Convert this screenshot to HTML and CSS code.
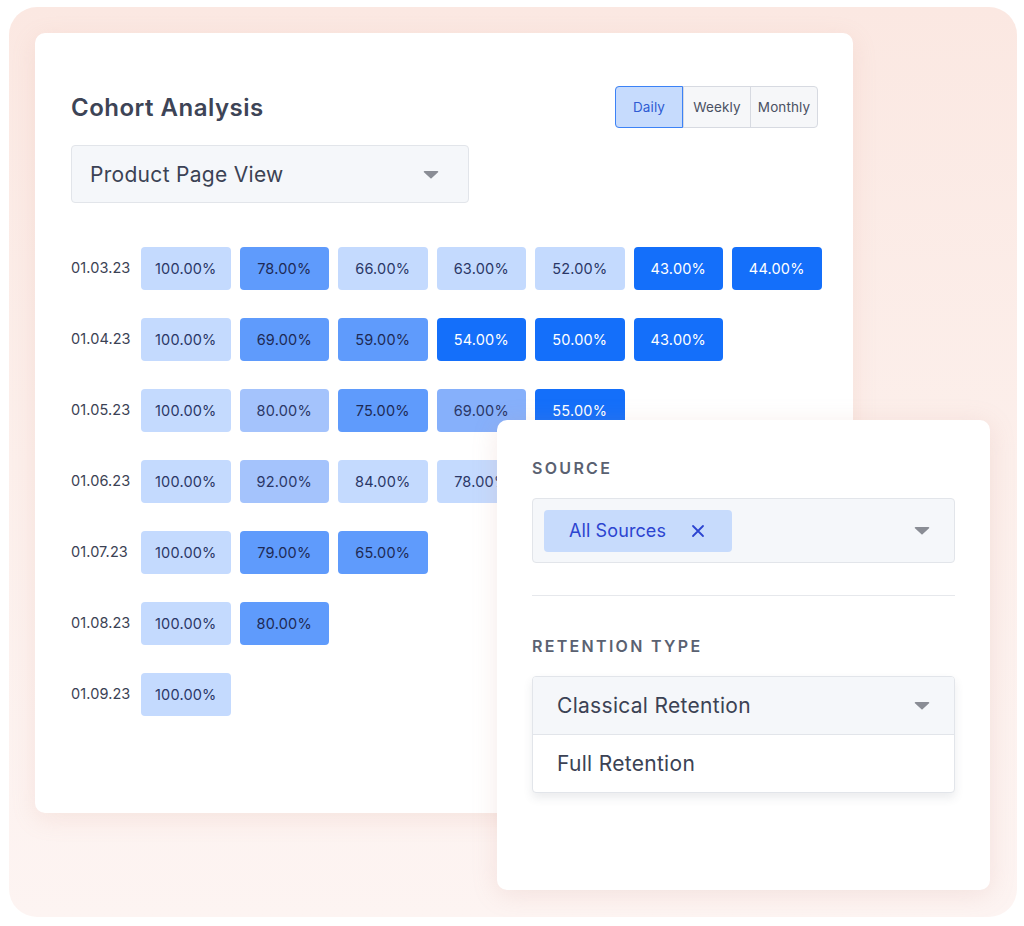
FILE: index.html
```html
<!DOCTYPE html>
<html lang="en">
<head>
<meta charset="utf-8">
<title>Cohort Analysis</title>
<link rel="stylesheet" href="styles.css">
</head>
<body>
<div class="backdrop">
  <section class="card">
    <header class="card-head">
      <h1 class="title">Cohort Analysis</h1>
      <div class="seg">
        <button class="seg-btn active">Daily</button>
        <button class="seg-btn">Weekly</button>
        <button class="seg-btn">Monthly</button>
      </div>
    </header>
    <div class="select event-select">
      <span>Product Page View</span>
      <svg class="caret" width="16" height="9" viewBox="0 0 16 9"><path d="M1.5 1h13a.8.8 0 0 1 .55 1.37l-6.5 5.8a.8.8 0 0 1-1.1 0L.95 2.37A.8.8 0 0 1 1.5 1z" fill="#8a8d95"/></svg>
    </div>
    <div class="cohort">
      <div class="row"><span class="date">01.03.23</span><span class="cell l">100.00%</span><span class="cell m">78.00%</span><span class="cell l">66.00%</span><span class="cell l">63.00%</span><span class="cell l">52.00%</span><span class="cell d">43.00%</span><span class="cell d">44.00%</span></div>
      <div class="row"><span class="date">01.04.23</span><span class="cell l">100.00%</span><span class="cell m">69.00%</span><span class="cell m">59.00%</span><span class="cell d">54.00%</span><span class="cell d">50.00%</span><span class="cell d">43.00%</span></div>
      <div class="row"><span class="date">01.05.23</span><span class="cell l">100.00%</span><span class="cell ml">80.00%</span><span class="cell m">75.00%</span><span class="cell mm">69.00%</span><span class="cell d">55.00%</span></div>
      <div class="row"><span class="date">01.06.23</span><span class="cell l">100.00%</span><span class="cell ml">92.00%</span><span class="cell l">84.00%</span><span class="cell l">78.00%</span></div>
      <div class="row"><span class="date">01.07.23</span><span class="cell l">100.00%</span><span class="cell m">79.00%</span><span class="cell m">65.00%</span></div>
      <div class="row"><span class="date">01.08.23</span><span class="cell l">100.00%</span><span class="cell m">80.00%</span></div>
      <div class="row"><span class="date">01.09.23</span><span class="cell l">100.00%</span></div>
    </div>
  </section>

  <aside class="popover">
    <div class="label">SOURCE</div>
    <div class="select source-select">
      <span class="chip">All Sources
        <svg class="chip-x" width="14" height="14" viewBox="0 0 14 14"><path d="M2 2l10 10M12 2L2 12" stroke="#2c44d0" stroke-width="1.8" stroke-linecap="round"/></svg>
      </span>
      <svg class="caret" width="16" height="9" viewBox="0 0 16 9"><path d="M1.5 1h13a.8.8 0 0 1 .55 1.37l-6.5 5.8a.8.8 0 0 1-1.1 0L.95 2.37A.8.8 0 0 1 1.5 1z" fill="#8a8d95"/></svg>
    </div>
    <hr class="divider">
    <div class="label label-2">RETENTION TYPE</div>
    <div class="dropdown">
      <div class="select retention-select">
        <span>Classical Retention</span>
        <svg class="caret" width="16" height="9" viewBox="0 0 16 9"><path d="M1.5 1h13a.8.8 0 0 1 .55 1.37l-6.5 5.8a.8.8 0 0 1-1.1 0L.95 2.37A.8.8 0 0 1 1.5 1z" fill="#8a8d95"/></svg>
      </div>
      <div class="option">Full Retention</div>
    </div>
  </aside>
</div>
</body>
</html>
```

FILE: styles.css
```css
* { box-sizing: border-box; }

html, body {
  margin: 0;
  padding: 0;
  background: #ffffff;
  font-family: "Inter", "Noto Sans", "Liberation Sans", sans-serif;
  color: #3b4254;
}

.backdrop {
  position: relative;
  width: 1008px;
  height: 910px;
  margin: 7px 0 0 9px;
  border-radius: 28px;
  background: linear-gradient(180deg, #fbe8e2 0%, #fcefeb 50%, #fdf4f2 100%);
}

.card {
  width: 818px;
  height: 780px;
  margin: 26px 0 0 26px;
  display: inline-block;
  vertical-align: top;
  background: #ffffff;
  border-radius: 10px;
  box-shadow: 0 6px 24px rgba(214, 150, 130, 0.16);
  padding: 53px 35px 0 36px;
}

.card-head {
  display: flex;
  align-items: center;
  justify-content: space-between;
  height: 42px;
}

.title {
  margin: 0;
  font-size: 24px;
  font-weight: 600;
  color: #3d4456;
  letter-spacing: 0.5px;
}

.seg {
  display: flex;
  height: 42px;
  border-radius: 4px;
  background: #f6f7f9;
  border: 1px solid #d7dae1;
}

.seg-btn {
  font-family: inherit;
  font-size: 13.5px;
  letter-spacing: 0.1px;
  color: #4a5163;
  background: transparent;
  border: 0;
  border-left: 1px solid #d7dae1;
  padding: 0;
  width: 67px;
}
.seg-btn:first-child { border-left: 0; }

.seg-btn.active {
  width: 68px;
  margin: -1px 0 -1px -1px;
  background: #c6dbfd;
  color: #2f5bd3;
  border: 1.5px solid #3c82f6;
  border-radius: 4px 0 0 4px;
}

.select {
  display: flex;
  align-items: center;
  justify-content: space-between;
  background: #f5f7fa;
  border: 1px solid #e2e5ea;
  border-radius: 4px;
}

.event-select {
  width: 398px;
  height: 58px;
  margin-top: 17px;
  padding: 0 29px 0 18px;
  font-size: 21px;
  letter-spacing: 0.3px;
  color: #3b4254;
}

.caret { display: block; flex: none; }

.cohort {
  margin-top: 44px;
  display: flex;
  flex-direction: column;
  gap: 28px;
}

.row {
  display: grid;
  grid-template-columns: 61px repeat(7, 89.5px);
  column-gap: 9px;
  height: 43px;
  align-items: center;
}

.row .date {
  font-size: 14.5px;
  letter-spacing: 0.1px;
  color: #3b4254;
  margin-top: -2px;
  white-space: nowrap;
}

.cell {
  height: 43px;
  border-radius: 4px;
  display: flex;
  align-items: center;
  justify-content: center;
  font-size: 14.5px;
  letter-spacing: 0.2px;
  color: #2a3767;
}

.cell.l { background: #c4dafe; }
.cell.ml { background: #a4c3fc; }
.cell.mm { background: #86b0fb; }
.cell.m { background: #5f9bfc; color: #1e2a55; }
.cell.d { background: #146ffa; color: #ffffff; }

.popover {
  position: absolute;
  left: 488px;
  top: 413px;
  width: 493px;
  height: 470px;
  background: #ffffff;
  border-radius: 10px;
  box-shadow: 0 4px 26px rgba(200, 140, 125, 0.18);
  padding: 37px 35px 0 35px;
}

.label {
  font-size: 16px;
  line-height: 22px;
  font-weight: 600;
  letter-spacing: 2.3px;
  color: #5a6171;
}

.source-select {
  margin-top: 19px;
  height: 65px;
  padding: 0 24px 0 11px;
}

.chip {
  display: flex;
  align-items: center;
  gap: 25px;
  height: 42px;
  width: 188px;
  padding-left: 25px;
  background: #c7dbfc;
  border-radius: 4px;
  font-size: 18px;
  letter-spacing: 0.1px;
  color: #2c44d0;
}

.divider {
  margin: 32px 0 0;
  border: 0;
  height: 1px;
  background: #e6e8ec;
}

.label-2 { margin-top: 39px; }

.dropdown {
  margin-top: 19px;
  border: 1px solid #e2e5ea;
  border-radius: 4px;
  box-shadow: 0 5px 10px rgba(60, 70, 90, 0.10);
  background: #ffffff;
  overflow: hidden;
}

.retention-select {
  height: 58px;
  border: 0;
  border-bottom: 1px solid #e2e5ea;
  border-radius: 0;
  padding: 0 24px 0 24px;
  font-size: 21px;
  letter-spacing: 0.3px;
  color: #3b4254;
}

.option {
  height: 57px;
  display: flex;
  align-items: center;
  padding-left: 24px;
  font-size: 21px;
  letter-spacing: 0.3px;
  color: #3b4254;
}
```
